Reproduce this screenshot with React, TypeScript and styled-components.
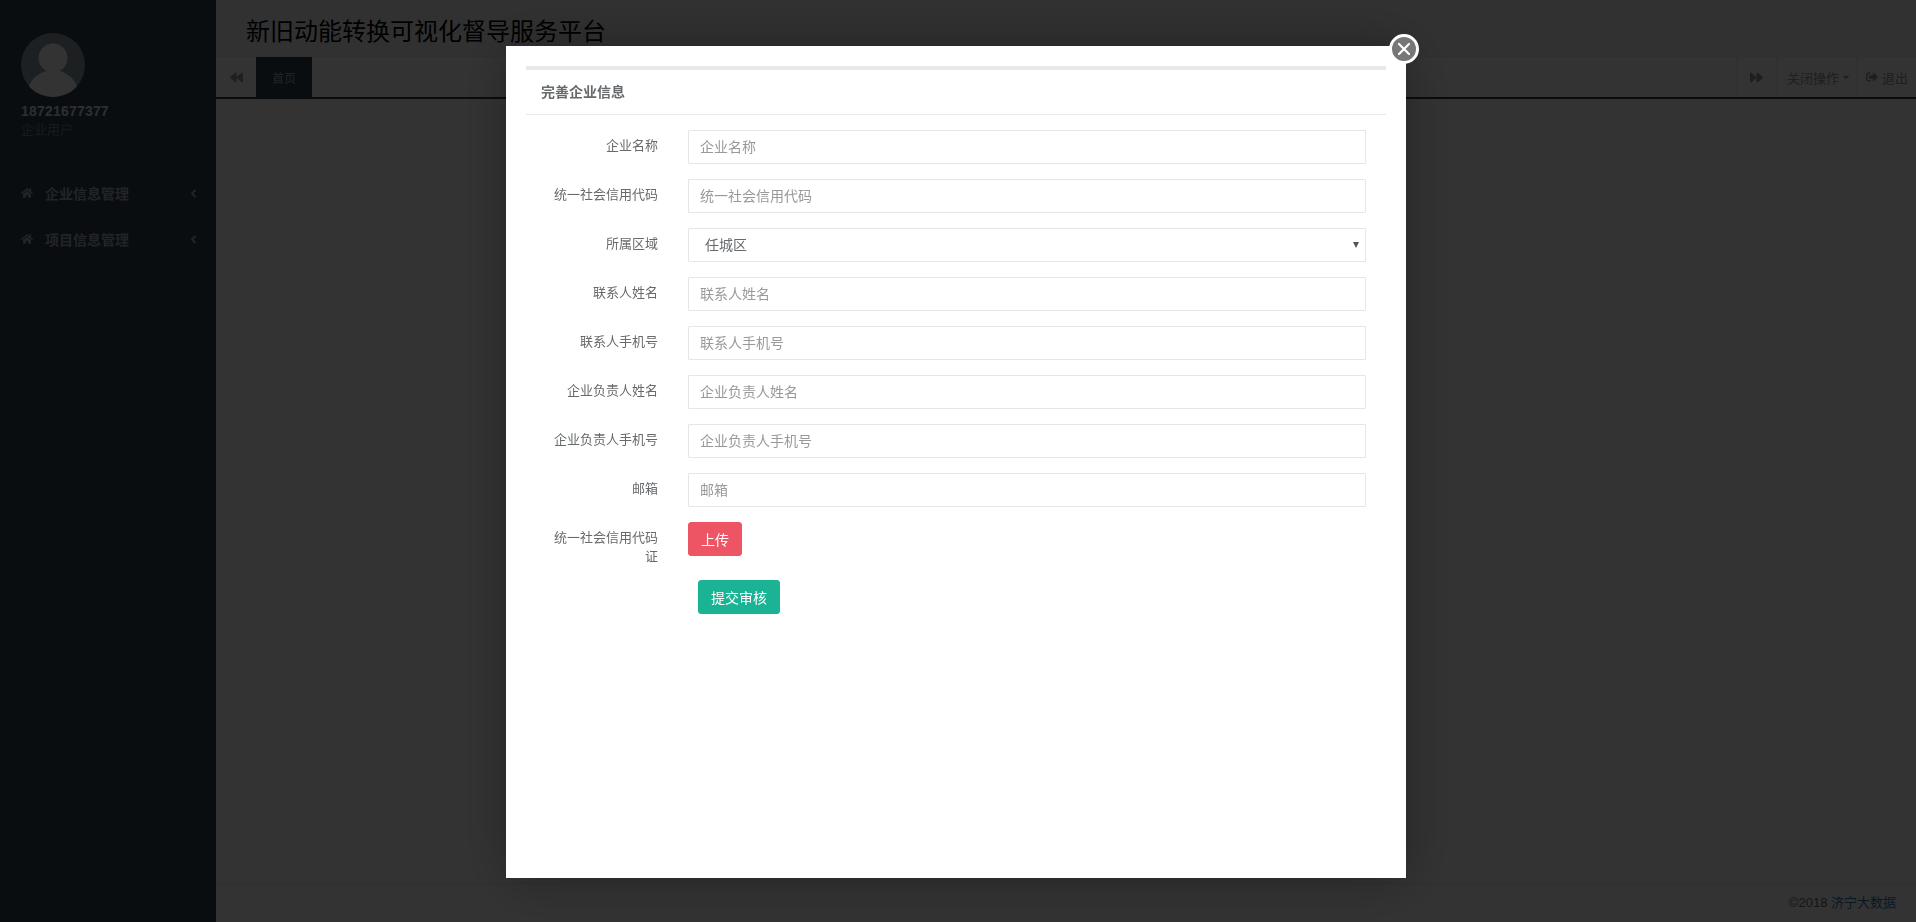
import * as React from 'react';
import styled, { createGlobalStyle } from 'styled-components';
import { FaAngleLeft, FaBackward, FaCaretDown, FaForward, FaHome, FaSignOutAlt } from 'react-icons/fa';

const FONT = '"Liberation Sans", "Noto Sans CJK SC", sans-serif';

const GlobalStyle = createGlobalStyle`
    html, body {
        margin: 0;
        height: 100%;
        overflow: hidden;
        font-family: ${FONT};
        font-size: 13px;
        color: #676a6c;
    }
    * {
        box-sizing: border-box;
    }
`;

const Page = styled.div`
    display: flex;
    height: 100vh;
`;

// Left navigation
const Sidebar = styled.aside`
    flex: 0 0 216px;
    background-color: #2f4050;
    color: #a7b1c2;
`;

const Profile = styled.div`
    height: 171px;
    padding: 33px 21px 0;
`;

const Avatar = styled.div`
    width: 64px;
    height: 64px;
    border-radius: 50%;
    overflow: hidden;
    margin-bottom: 5px;
`;

const UserName = styled.div`
    font-size: 14px;
    font-weight: 700;
    letter-spacing: 0.2px;
    line-height: 19px;
    color: #dfe4ed;
`;

const UserRole = styled.div`
    font-size: 13px;
    line-height: 18px;
    color: #6f8496;
`;

const NavItem = styled.div`
    display: flex;
    align-items: center;
    height: 46px;
    padding: 0 16px 2px 21px;
    font-size: 14px;
    font-weight: 700;
`;

const NavLabel = styled.span`
    flex: 1;
    margin-left: 12px;
`;

// Main column
const Main = styled.main`
    flex: 1;
    min-width: 0;
    display: flex;
    flex-direction: column;
    background-color: #fff;
`;

const Header = styled.header`
    height: 57px;
    padding: 15px 30px 0;
    background-color: #f3f3f4;
    border-bottom: 1px solid #eef0f1;
    font-size: 24px;
    line-height: 34px;
    color: #000;
`;

const TabBar = styled.nav`
    display: flex;
    height: 42px;
    border-bottom: 2px solid #2f4050;
    background-color: #fff;
`;

const TabArrow = styled.div<{ $bordered?: boolean }>`
    display: flex;
    align-items: center;
    justify-content: center;
    width: 40px;
    border-left: ${props => (props.$bordered ? '1px solid #eee' : 'none')};
    font-size: 13px;
    color: #999;
`;

const Tab = styled.div`
    display: flex;
    align-items: center;
    justify-content: center;
    width: 56px;
    background-color: #2f4050;
    color: #a7b1c2;
    font-size: 12px;
`;

const TabActions = styled.div`
    display: flex;
    margin-left: auto;
`;

const TabAction = styled.div<{ $wide?: boolean }>`
    display: flex;
    align-items: center;
    gap: ${props => (props.$wide ? '4px' : '2px')};
    width: ${props => (props.$wide ? '60px' : '80px')};
    padding-left: ${props => (props.$wide ? '9px' : '10px')};
    border-left: 1px solid #eee;
    font-size: 13px;
    color: #999;
`;

const Content = styled.div`
    flex: 1;
`;

const Footer = styled.footer`
    height: 39px;
    padding-right: 20px;
    border-top: 1px solid #e7eaec;
    font-size: 13px;
    line-height: 38px;
    text-align: right;
`;

const FooterLink = styled.span`
    color: #337ab7;
`;

// Dialog
const Overlay = styled.div`
    position: fixed;
    inset: 0;
    display: flex;
    justify-content: center;
    align-items: flex-start;
    padding: 46px 4px 0 0;
    background-color: rgba(0, 0, 0, 0.8);
`;

const Dialog = styled.div`
    position: relative;
    width: 900px;
    height: 832px;
    padding: 20px 20px 0;
    background-color: #fff;
    box-shadow: 1px 1px 50px rgba(0, 0, 0, 0.3);
`;

const CloseButton = styled.button`
    position: absolute;
    top: -12px;
    right: -13px;
    display: flex;
    align-items: center;
    justify-content: center;
    width: 30px;
    height: 30px;
    padding: 0;
    border: 3px solid #fff;
    border-radius: 50%;
    background-color: #777;
`;

const DialogTitle = styled.h5`
    height: 49px;
    margin: 0;
    padding: 12px 15px 0;
    border-top: 4px solid #e7eaec;
    border-bottom: 1px solid #e7eaec;
    font-size: 14px;
    font-weight: 700;
    line-height: 20px;
    color: #676a6c;
`;

const Form = styled.form`
    padding: 15px 0 0 21px;
`;

const Row = styled.div<{ $tight?: boolean }>`
    display: grid;
    grid-template-columns: 111px 678px;
    column-gap: 30px;
    margin-bottom: ${props => (props.$tight ? '14px' : '15px')};
`;

const Label = styled.label`
    padding-top: 7px;
    font-size: 13px;
    line-height: 18.6px;
    text-align: right;
    color: #676a6c;
`;

const Input = styled.input`
    display: block;
    width: 100%;
    height: 34px;
    padding: 6px 12px 6px 11px;
    border: 1px solid #e5e6e7;
    border-radius: 1px;
    font-family: ${FONT};
    font-size: 14px;
    color: #676a6c;
    outline: none;

    &::placeholder {
        color: #999;
        opacity: 1;
    }
`;

const SelectWrap = styled.div`
    position: relative;
`;

const Select = styled.select`
    display: block;
    width: 100%;
    height: 34px;
    padding: 0 12px 0 16px;
    border: 1px solid #e5e6e7;
    border-radius: 1px;
    appearance: none;
    background-color: #fff;
    font-family: ${FONT};
    font-size: 14px;
    color: #676a6c;
    outline: none;
`;

const SelectArrow = styled.span`
    position: absolute;
    top: 14px;
    right: 7px;
    width: 0;
    height: 0;
    border-top: 6px solid #555;
    border-left: 3px solid transparent;
    border-right: 3px solid transparent;
    pointer-events: none;
`;

const Button = styled.button<{ $color: string; $indent?: boolean }>`
    display: block;
    height: 34px;
    margin-left: ${props => (props.$indent ? '10px' : '0')};
    padding: 0 12px;
    border: 1px solid ${props => props.$color};
    border-radius: 3px;
    background-color: ${props => props.$color};
    font-family: ${FONT};
    font-size: 14px;
    color: #fff;
`;

const fields = [
    '企业名称',
    '统一社会信用代码',
    '所属区域',
    '联系人姓名',
    '联系人手机号',
    '企业负责人姓名',
    '企业负责人手机号',
    '邮箱',
];

const AvatarImage = () => (
    <svg width="64" height="64" viewBox="0 0 64 64">
        <rect width="64" height="64" fill="#8da0ab" />
        <circle cx="32" cy="25" r="14.5" fill="#fff" />
        <ellipse cx="32" cy="63" rx="26" ry="26" fill="#fff" />
    </svg>
);

const NavEntry = ({ label }: { label: string }) => (
    <NavItem>
        <FaHome size={12} />
        <NavLabel>{label}</NavLabel>
        <FaAngleLeft size={13} />
    </NavItem>
);

export default function App() {
    return (
        <>
            <GlobalStyle />
            <Page>
                <Sidebar>
                    <Profile>
                        <Avatar>
                            <AvatarImage />
                        </Avatar>
                        <UserName>18721677377</UserName>
                        <UserRole>企业用户</UserRole>
                    </Profile>
                    <NavEntry label="企业信息管理" />
                    <NavEntry label="项目信息管理" />
                </Sidebar>
                <Main>
                    <Header>新旧动能转换可视化督导服务平台</Header>
                    <TabBar>
                        <TabArrow>
                            <FaBackward />
                        </TabArrow>
                        <Tab>首页</Tab>
                        <TabActions>
                            <TabArrow $bordered>
                                <FaForward />
                            </TabArrow>
                            <TabAction>
                                关闭操作
                                <FaCaretDown size={10} />
                            </TabAction>
                            <TabAction $wide>
                                <FaSignOutAlt size={12} />
                                退出
                            </TabAction>
                        </TabActions>
                    </TabBar>
                    <Content />
                    <Footer>
                        ©2018 <FooterLink>济宁大数据</FooterLink>
                    </Footer>
                </Main>
            </Page>
            <Overlay>
                <Dialog>
                    <CloseButton type="button" aria-label="关闭">
                        <svg width="14" height="14" viewBox="0 0 14 14">
                            <path d="M2 2l10 10M12 2L2 12" stroke="#fff" strokeWidth="2.2" strokeLinecap="round" />
                        </svg>
                    </CloseButton>
                    <DialogTitle>完善企业信息</DialogTitle>
                    <Form>
                        {fields.map(field => (
                            <Row key={field}>
                                <Label>{field}</Label>
                                {field === '所属区域' ? (
                                    <SelectWrap>
                                        <Select defaultValue="任城区">
                                            <option>任城区</option>
                                        </Select>
                                        <SelectArrow />
                                    </SelectWrap>
                                ) : (
                                    <Input placeholder={field} />
                                )}
                            </Row>
                        ))}
                        <Row $tight>
                            <Label>统一社会信用代码证</Label>
                            <div>
                                <Button type="button" $color="#ed5565">上传</Button>
                            </div>
                        </Row>
                        <Row>
                            <span />
                            <div>
                                <Button type="button" $color="#1ab394" $indent>提交审核</Button>
                            </div>
                        </Row>
                    </Form>
                </Dialog>
            </Overlay>
        </>
    );
}
